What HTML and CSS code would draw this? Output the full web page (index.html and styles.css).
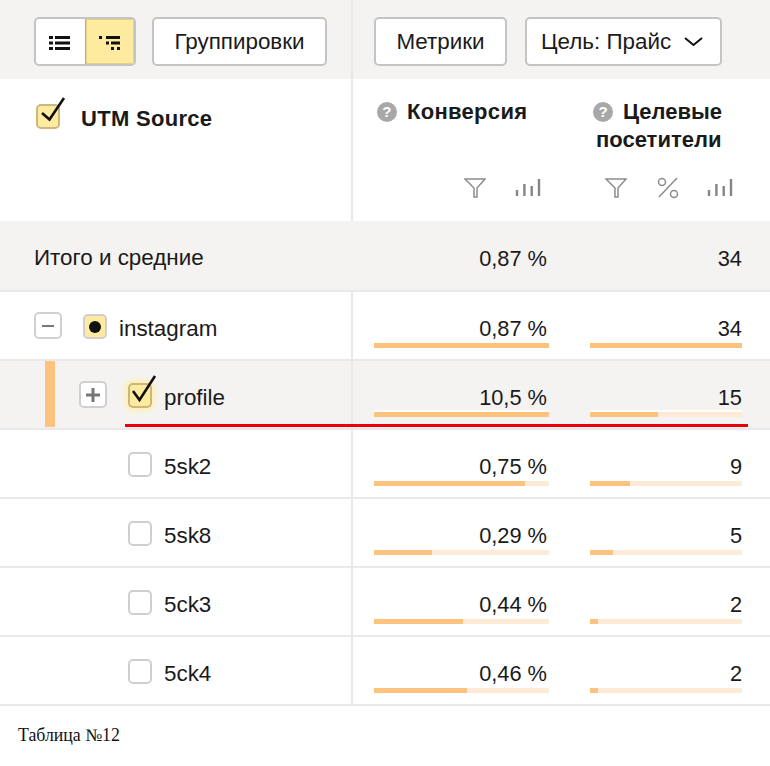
FILE: index.html
```html
<!DOCTYPE html>
<html lang="ru">
<head>
<meta charset="utf-8">
<title>Таблица №12</title>
<link rel="stylesheet" href="styles.css">
</head>
<body>
<div class="table">
  <div class="toolbar">
    <div class="tool-left">
      <div class="switch">
        <span class="switch-btn">
          <svg width="22" height="16" viewBox="0 0 22 16"><path d="M0 2h4v3H0zM6 2h15v3H6zM0 7.500h4v3H0zM6 7.500h15v3H6zM0 13h4v3H0zM6 13h15v3H6z" fill="#111"/></svg>
        </span>
        <span class="switch-btn switch-on">
          <svg width="22" height="16" viewBox="0 0 22 16"><path d="M0 2h3v3H0zM7 2h14v3H7zM7 7.500h3v3H7zM12 7.500h9v3h-9zM12 13h3v3h-3zM18 13h3v3h-3z" fill="#111"/></svg>
        </span>
      </div>
      <span class="btn btn-group">Группировки</span>
    </div>
    <div class="tool-right">
      <span class="btn btn-metric">Метрики</span>
      <span class="btn btn-goal">Цель: Прайс
        <svg class="chev" width="21" height="10" viewBox="0 0 21 10"><path d="M2 1l8.500 7L19 1" fill="none" stroke="#111" stroke-width="2"/></svg>
      </span>
    </div>
  </div>

  <div class="head">
    <div class="head-name">
      <span class="check check-on check-head">
        <svg class="tick" width="32" height="32" viewBox="0 0 32 32"><path d="M6 21l7.500 6.500L28 6" fill="none" stroke="#111" stroke-width="2.600"/></svg>
      </span>
      <span class="head-title">UTM Source</span>
    </div>
    <div class="head-cols">
      <div class="head-col col-a">
        <div class="head-label"><span class="hint">?</span>Конверсия</div>
        <div class="head-icons icons-a">
          <svg class="ico" width="22" height="22" viewBox="0 0 22 22"><path d="M1 2h20l-8 9v9h-3v-9z" fill="none" stroke="#8c8c8c" stroke-width="1.500"/></svg>
          <svg class="ico" width="26" height="22" viewBox="0 0 26 22"><path d="M2 13v6M9.400 7v12M16.700 9v10M24 2v17" stroke="#858585" stroke-width="2.400"/></svg>
        </div>
      </div>
      <div class="head-col col-b">
        <div class="head-label"><span class="hint">?</span>Целевые<br><span class="label-line">посетители</span></div>
        <div class="head-icons icons-b">
          <svg class="ico" width="22" height="22" viewBox="0 0 22 22"><path d="M1 2h20l-8 9v9h-3v-9z" fill="none" stroke="#8c8c8c" stroke-width="1.500"/></svg>
          <svg class="ico" width="24" height="22" viewBox="0 0 24 22"><circle cx="5" cy="5" r="3.500" fill="none" stroke="#8c8c8c" stroke-width="1.500"/><circle cx="17" cy="17" r="3.500" fill="none" stroke="#8c8c8c" stroke-width="1.500"/><path d="M20 1L2 20" stroke="#8c8c8c" stroke-width="1.500"/></svg>
          <svg class="ico" width="26" height="22" viewBox="0 0 26 22"><path d="M2 13v6M9.400 7v12M16.700 9v10M24 2v17" stroke="#858585" stroke-width="2.400"/></svg>
        </div>
      </div>
    </div>
  </div>

  <div class="total">
    <div class="name">Итого и средние</div>
    <div class="cells">
      <div class="cell col-a"><span class="val">0,87 %</span></div>
      <div class="cell col-b"><span class="val">34</span></div>
    </div>
  </div>

  <div class="row">
    <div class="name lvl-1">
      <span class="tog">
        <svg width="12" height="12" viewBox="0 0 12 12"><path d="M0 5h12v2H0z" fill="#777"/></svg>
      </span>
      <span class="check check-on check-dot"><i class="dot"></i></span>
      <span>instagram</span>
    </div>
    <div class="cells">
      <div class="cell col-a"><span class="val">0,87 %</span><div class="bar"><div class="fill" style="width:100%"></div></div></div>
      <div class="cell col-b"><span class="val">34</span><div class="bar"><div class="fill" style="width:100%"></div></div></div>
    </div>
  </div>

  <div class="row row-sel">
    <span class="side"></span>
    <span class="red"></span>
    <div class="name lvl-2">
      <span class="tog tog-plus">
        <svg width="14" height="14" viewBox="0 0 14 14"><path d="M5.500 0h3v5.500H14v3H8.500V14h-3V8.500H0v-3h5.500z" fill="#777"/></svg>
      </span>
      <span class="check check-on check-glow">
        <svg class="tick" width="32" height="32" viewBox="0 0 32 32"><path d="M5 20l6.500 9L27 5" fill="none" stroke="#111" stroke-width="2.600"/></svg>
      </span>
      <span>profile</span>
    </div>
    <div class="cells">
      <div class="cell col-a"><span class="val">10,5 %</span><div class="bar"><div class="fill" style="width:100%"></div></div></div>
      <div class="cell col-b"><span class="val">15</span><div class="bar"><div class="fill" style="width:45%"></div></div></div>
    </div>
  </div>

  <div class="row">
    <div class="name lvl-3"><span class="check"></span><span>5sk2</span></div>
    <div class="cells">
      <div class="cell col-a"><span class="val">0,75 %</span><div class="bar"><div class="fill" style="width:86%"></div></div></div>
      <div class="cell col-b"><span class="val">9</span><div class="bar"><div class="fill" style="width:26%"></div></div></div>
    </div>
  </div>

  <div class="row">
    <div class="name lvl-3"><span class="check"></span><span>5sk8</span></div>
    <div class="cells">
      <div class="cell col-a"><span class="val">0,29 %</span><div class="bar"><div class="fill" style="width:33%"></div></div></div>
      <div class="cell col-b"><span class="val">5</span><div class="bar"><div class="fill" style="width:15%"></div></div></div>
    </div>
  </div>

  <div class="row">
    <div class="name lvl-3"><span class="check"></span><span>5ck3</span></div>
    <div class="cells">
      <div class="cell col-a"><span class="val">0,44 %</span><div class="bar"><div class="fill" style="width:51%"></div></div></div>
      <div class="cell col-b"><span class="val">2</span><div class="bar"><div class="fill" style="width:5%"></div></div></div>
    </div>
  </div>

  <div class="row">
    <div class="name lvl-3"><span class="check"></span><span>5ck4</span></div>
    <div class="cells">
      <div class="cell col-a"><span class="val">0,46 %</span><div class="bar"><div class="fill" style="width:53%"></div></div></div>
      <div class="cell col-b"><span class="val">2</span><div class="bar"><div class="fill" style="width:5%"></div></div></div>
    </div>
  </div>
</div>
<p class="caption">Таблица №12</p>
</body>
</html>
```
FILE: styles.css
```css
* { box-sizing: border-box; }
html, body { margin: 0; padding: 0; background: #fff; }
body {
  width: 770px;
  height: 766px;
  overflow: hidden;
  font-family: "Liberation Sans", Arial, sans-serif;
  font-size: 22.400px;
  color: #1a1a1a;
}
.toolbar {
  display: flex;
  height: 79px;
  background: #f4f3f1;
}
.tool-left {
  width: 353px;
  border-right: 2px solid #e9e9e9;
  display: flex;
  align-items: center;
  gap: 16px;
  padding: 4px 0 0 34px;
  flex: none;
}
.tool-right {
  display: flex;
  align-items: center;
  gap: 18px;
  padding: 4px 0 0 21px;
}
.switch {
  display: flex;
  width: 102px;
  height: 49px;
  border: 2px solid #c4c4c4;
  border-radius: 5px;
  background: #fff;
  overflow: hidden;
}
.switch-btn {
  flex: 1;
  display: flex;
  align-items: center;
  justify-content: center;
}
.switch-on {
  background: #ffeba0;
  border-left: 1px solid #c9b16a;
  box-shadow: inset 0 0 0 1px #e6cf85;
}
.btn {
  display: flex;
  align-items: center;
  justify-content: center;
  height: 49px;
  border: 2px solid #c4c4c4;
  border-radius: 5px;
  background: #fff;
  white-space: nowrap;
}
.btn-group { width: 175px; }
.btn-metric { width: 133px; }
.btn-goal { width: 197px; gap: 12px; justify-content: flex-start; padding-left: 14px; }
.chev { flex: none; }

.head {
  display: flex;
  height: 142px;
}
.head-name {
  width: 353px;
  flex: none;
  border-right: 2px solid #e9e9e9;
  padding: 25px 0 0 36px;
  display: flex;
  align-items: flex-start;
  gap: 21px;
}
.head-title {
  font-weight: 700;
  font-size: 22px;
  margin-top: 2px;
  letter-spacing: .3px;
}
.head-cols { display: flex; flex: 1; }
.head-col { position: relative; }
.col-a { width: 196px; padding-left: 21px; flex: none; }
.col-b { width: 195px; padding-left: 41px; flex: none; }
.head-label {
  padding: 19px 0 0 3px;
  font-weight: 700;
  font-size: 22px;
  line-height: 28px;
  white-space: nowrap;
}
.col-a .head-label { letter-spacing: .3px; }
.label-line { margin-left: 3px; }
.head-col .hint { margin-right: 10px; }
.hint {
  display: inline-flex;
  align-items: center;
  justify-content: center;
  width: 20px;
  height: 20px;
  border-radius: 50%;
  background: #a8a8a8;
  color: #fff;
  font-size: 15px;
  vertical-align: 2px;
}
.head-icons {
  position: absolute;
  top: 98px;
  display: flex;
  align-items: center;
}
.icons-a { left: 111px; gap: 29px; }
.icons-b { left: 56px; gap: 30px; }
.icons-b .ico:last-child { margin-left: -4px; }

.total {
  display: flex;
  height: 71px;
  background: #f4f3f1;
  border-bottom: 2px solid #e9e9e9;
}
.row {
  position: relative;
  display: flex;
  height: 69px;
  border-bottom: 2px solid #e9e9e9;
}
.row-sel { background: #f4f3f1; }
.name {
  width: 353px;
  flex: none;
  display: flex;
  align-items: center;
  padding: 6px 0 0 34px;
  border-right: 2px solid #e9e9e9;
}
.total .name { padding: 5px 0 0 34px; border-right: 0; }
.lvl-1 { gap: 12px; }
.lvl-1 .tog { margin-right: 9px; }
.lvl-2 { padding-left: 79px; gap: 12px; }
.lvl-2 .tog { margin-right: 9px; }
.lvl-3 { padding-left: 128px; gap: 12px; }
.tog {
  display: flex;
  align-items: center;
  justify-content: center;
  width: 28px;
  height: 27px;
  margin-top: -6px;
  border: 2px solid #d0d0d0;
  border-radius: 5px;
  background: #fff;
  flex: none;
}
.check {
  position: relative;
  display: block;
  width: 24px;
  height: 25px;
  margin-top: -4px;
  border: 2px solid #cfcfcf;
  border-radius: 5px;
  background: #fff;
  flex: none;
}
.check-on {
  background: #ffeba0;
  border-color: #c9b77c;
}
.check-head { margin-top: 0; }
.check-dot { border-color: #cfcfcf; }
.check-glow { box-shadow: 0 0 4px 3px #ffefb5; }
.dot {
  position: absolute;
  left: 4px;
  top: 5px;
  width: 12px;
  height: 12px;
  border-radius: 50%;
  background: #111;
}
.tick {
  position: absolute;
  left: -2px;
  top: -14px;
}
.cells { display: flex; flex: 1; }
.cell {
  position: relative;
  text-align: right;
  padding-top: 24px;
}
.cell.col-a { padding-right: 2px; width: 196px; font-size: 21.800px; }
.cell.col-b { width: 193px; font-size: 21.800px; }
.total .cell { padding-top: 25px; }
.val {
  display: block;
  line-height: 26px;
  position: relative;
  z-index: 1;
}
.bar {
  position: absolute;
  right: 0;
  bottom: 11px;
  height: 5px;
  background: #fdebd8;
  box-shadow: 0 -2px 0 rgba(255, 255, 255, .8);
}
.col-a .bar { width: 175px; }
.col-b .bar { width: 152px; }
.fill {
  height: 100%;
  background: #fec27f;
}
.side {
  position: absolute;
  left: 45px;
  top: 0;
  width: 10px;
  height: 66px;
  background: #fec27f;
}
.red {
  position: absolute;
  left: 125px;
  top: 63px;
  width: 623px;
  height: 3px;
  background: #e8000b;
  z-index: 2;
}
.caption {
  margin: 19px 0 0 18px;
  font-family: "Liberation Serif", "Times New Roman", serif;
  font-size: 17.800px;
  color: #111;
}
```
